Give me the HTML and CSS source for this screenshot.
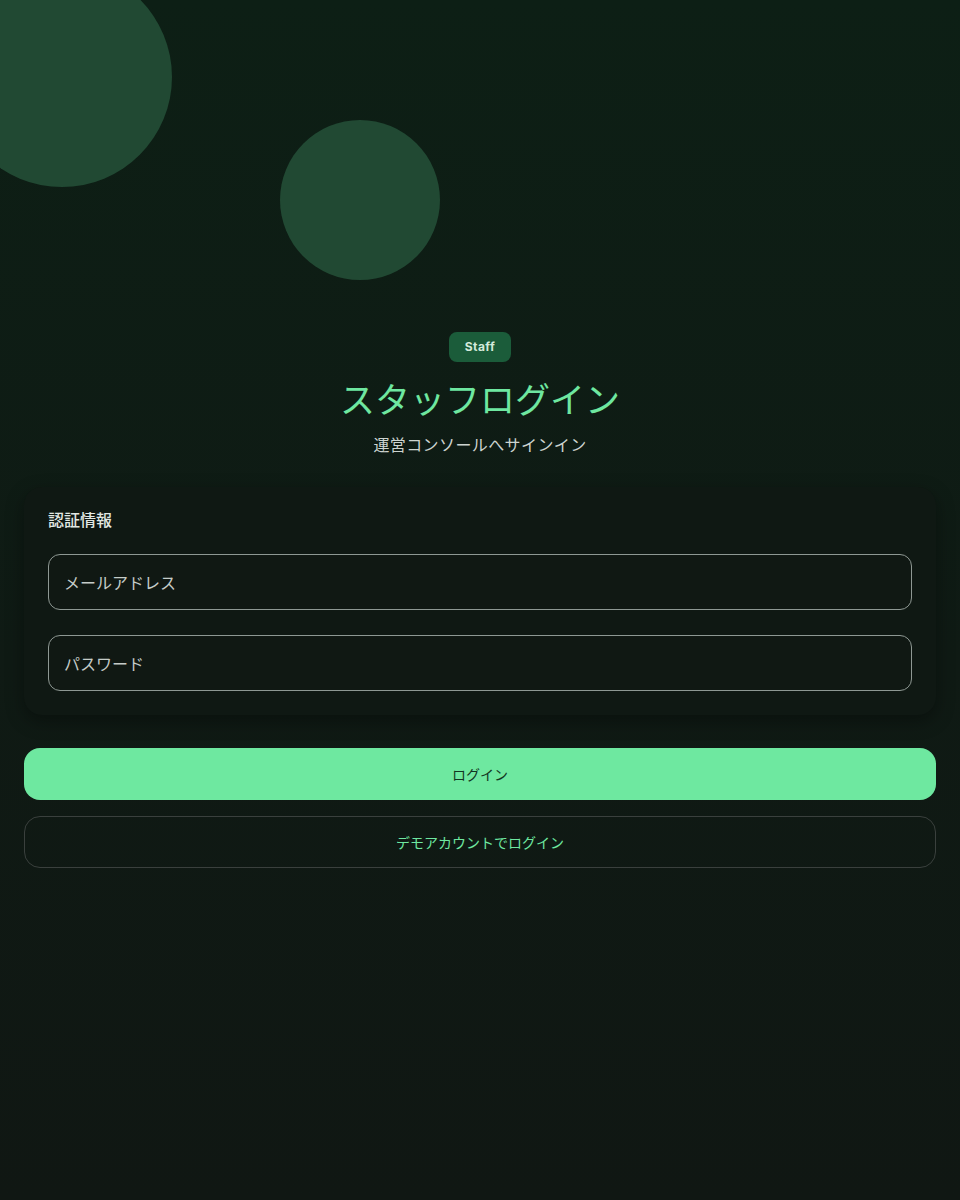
FILE: index.html
```html
<!DOCTYPE html>
<html lang="ja">
<head>
<meta charset="utf-8">
<title>スタッフログイン</title>
<link rel="stylesheet" href="styles.css">
</head>
<body>
<div class="deco" aria-hidden="true">
  <span class="blob blob-a"></span>
  <span class="blob blob-b"></span>
</div>
<main class="page">
  <header class="hero">
    <span class="badge">Staff</span>
    <h1 class="title">スタッフログイン</h1>
    <p class="subtitle">運営コンソールへサインイン</p>
  </header>
  <section class="card">
    <h2 class="card-label">認証情報</h2>
    <div class="fields">
      <input class="field" type="email" placeholder="メールアドレス">
      <input class="field" type="password" placeholder="パスワード">
    </div>
  </section>
  <div class="actions">
    <button class="btn btn-primary" type="button">ログイン</button>
    <button class="btn btn-outline" type="button">デモアカウントでログイン</button>
  </div>
</main>
</body>
</html>
```

FILE: styles.css
```css
* { box-sizing: border-box; }

html, body { height: 100%; }

body {
  margin: 0;
  min-height: 1200px;
  background: linear-gradient(180deg, #0d1f15 0%, #0f1a14 55%, #101713 100%);
  color: #dfe5e1;
  font-family: "Noto Sans CJK JP", "Noto Sans", sans-serif;
  position: relative;
  overflow: hidden;
}

.deco {
  position: absolute;
  inset: 0;
  pointer-events: none;
}

.blob {
  position: absolute;
  border-radius: 50%;
  background: #214933;
}

.blob-a {
  width: 220px;
  height: 220px;
  left: -48px;
  top: -33px;
}

.blob-b {
  width: 160px;
  height: 160px;
  left: 280px;
  top: 120px;
}

.page {
  position: relative;
  padding: 332px 24px 24px;
  display: flex;
  flex-direction: column;
}

.hero {
  display: flex;
  flex-direction: column;
  align-items: center;
}

.badge {
  display: inline-block;
  height: 30px;
  padding: 0 16px;
  line-height: 30px;
  border-radius: 8px;
  background: #1b5c3a;
  color: #d3eadb;
  font-family: "Inter", "Noto Sans", sans-serif;
  font-size: 12px;
  font-weight: 700;
  letter-spacing: 0.4px;
}

.title {
  margin: 12px 0 0;
  font-size: 35px;
  line-height: 48px;
  font-weight: 400;
  color: #6ee7a0;
}

.subtitle {
  margin: 10px 0 0;
  font-size: 16px;
  line-height: 24px;
  letter-spacing: 0.4px;
  color: #cdd4d0;
}

.card {
  margin-top: 31px;
  padding: 20px 24px 24px;
  background: #0f1813;
  border-radius: 18px;
  box-shadow: 0 6px 18px rgba(0, 0, 0, 0.35);
}

.card-label {
  margin: 0 0 23px;
  font-size: 16px;
  line-height: 24px;
  font-weight: 500;
  color: #e2e8e4;
}

.fields {
  display: flex;
  flex-direction: column;
  gap: 25px;
}

.field {
  display: block;
  width: 100%;
  height: 56px;
  padding: 0 15px;
  border: 1px solid #8e9893;
  border-radius: 12px;
  background: #101813;
  color: #e2e8e4;
  font-family: inherit;
  font-size: 16px;
  outline: none;
}

.field::placeholder {
  color: #c5ccc8;
  opacity: 1;
}

.actions {
  margin-top: 33px;
  display: flex;
  flex-direction: column;
  gap: 16px;
}

.btn {
  display: block;
  width: 100%;
  height: 52px;
  border-radius: 16px;
  font-family: inherit;
  font-size: 14px;
  cursor: pointer;
}

.btn-primary {
  border: none;
  background: #6ee8a0;
  color: #123622;
}

.btn-outline {
  border: 1px solid #3a403d;
  background: transparent;
  color: #6ee7a0;
}
```
